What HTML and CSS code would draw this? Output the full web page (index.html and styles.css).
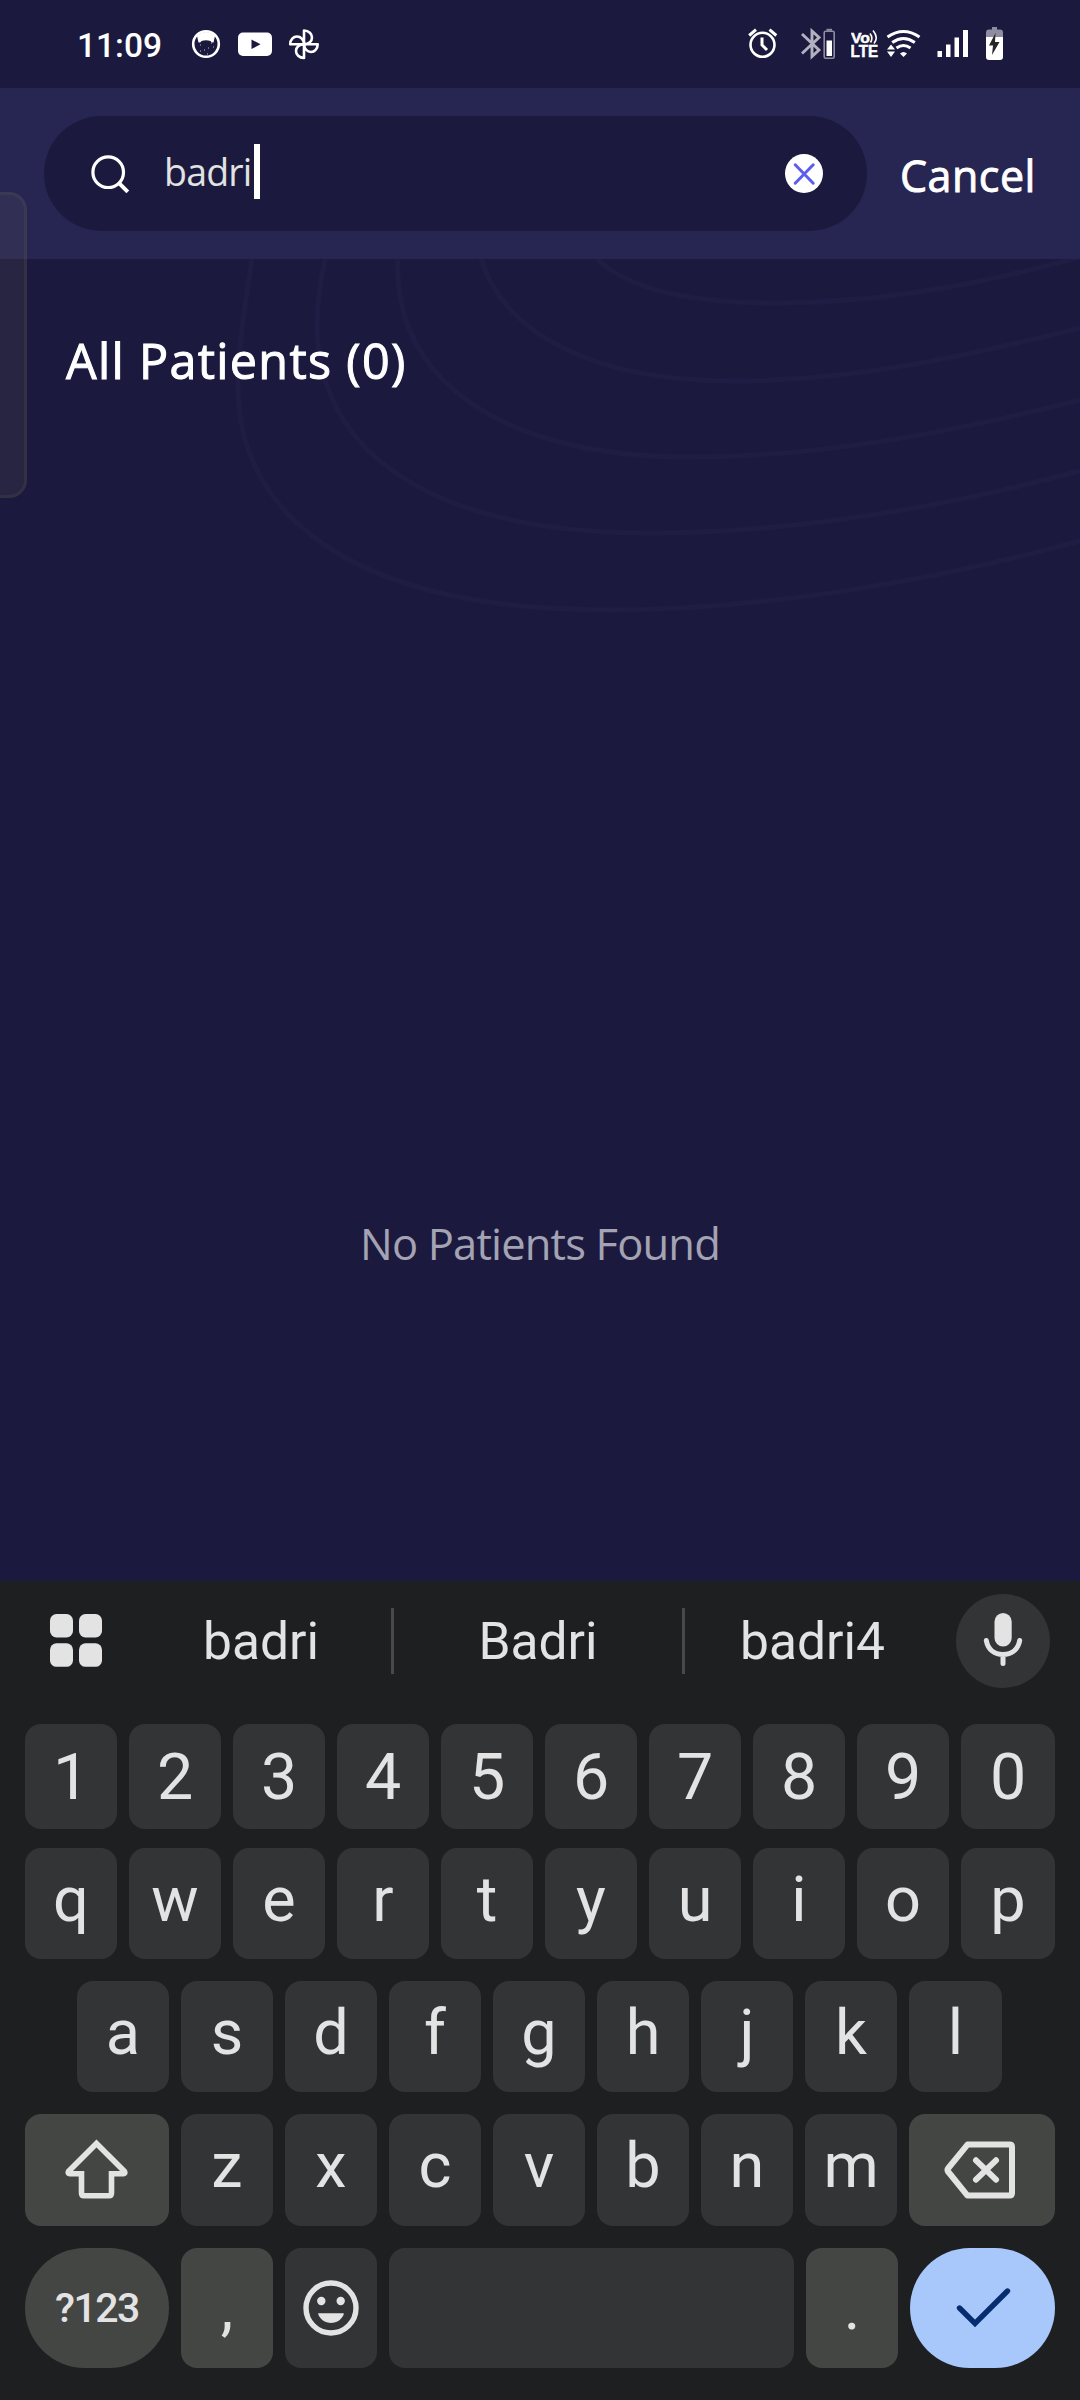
FILE: index.html
```html
<!DOCTYPE html>
<html lang="en">
<head>
<meta charset="utf-8">
<title>Patient search</title>
<link rel="stylesheet" href="styles.css">
</head>
<body>
<div class="screen">
  <div class="status">
    <span class="time">11:09</span>
    <svg class="st-cat" width="30" height="40" viewBox="191 24 30 40"><circle cx="206" cy="44" r="12.8" fill="none" stroke="#fff" stroke-width="2.6"/><path d="M197 36Q206 28 215 36L213.500 42.500Q211.500 43 210.500 41Q206 39.500 201.500 41Q200.500 43 198.500 42.500Z" fill="#fff"/><path d="M200 45h1M204 50h1M211 43h1M208 48h1M213 47h1M207 54h1M200 51h1" stroke="#b9b9c8" stroke-width="1"/></svg>
    <svg class="st-tube" width="34" height="40" viewBox="238 24 34 40"><rect x="238" y="32.500" width="34" height="23.500" rx="5" fill="#fff"/><path d="M251.500 39.500v9.500l9-4.700z" fill="#1b1a3e"/></svg>
    <svg class="st-fan" width="32" height="40" viewBox="288 24 32 40"><g fill="none" stroke="#fff" stroke-width="2.600" stroke-linejoin="round"><path d="M304 44.200V30.500C309 30.500 312 34 312 37.500C312 41 309 44.200 304 44.200"/><path d="M304 44.200H317.700C317.700 49 314.500 52 311 52C307.500 52 304 49 304 44.200"/><path d="M304 44.200V58C299 58 296 54.500 296 51C296 47.500 299 44.200 304 44.200"/><path d="M304 44.200H290.200C290.200 39.500 293.500 36.500 297 36.500C300.500 36.500 304 39.500 304 44.200"/></g></svg>
    <span class="grow"></span>
    <svg class="st-alarm" width="30" height="40" viewBox="748 24 30 40"><g fill="none" stroke="#fff" stroke-width="2.600"><circle cx="762.500" cy="44.800" r="12"/><path d="M762 37.500V45l5 5" stroke-width="3"/><path d="M749.200 35.500l6.800-5.800M776.300 35.500l-6.800-5.800" stroke-width="3"/></g></svg>
    <svg class="st-bt" width="35" height="40" viewBox="801 24 35 40"><path d="M802 34L819 50L812 56.500V31L819 37.500L802 53.500" fill="none" stroke="#b2b1c0" stroke-width="2.900"/><rect x="824.200" y="31.200" width="10" height="27" rx="1.500" fill="none" stroke="#8d8ca2" stroke-width="1.600"/><path d="M826.500 29.800h5.500" stroke="#8d8ca2" stroke-width="2"/><rect x="826.500" y="40.500" width="5.500" height="15.500" fill="#fff"/></svg>
    <svg class="st-volte" width="28" height="40" viewBox="851 24 28 40"><g fill="#fff" stroke="#fff" stroke-width=".5" font-family="Liberation Sans, sans-serif" font-weight="700"><text x="851" y="42.500" font-size="15.500" textLength="19" lengthAdjust="spacingAndGlyphs">Vo</text><text x="850.500" y="57" font-size="16" textLength="27.500" lengthAdjust="spacingAndGlyphs">LTE</text></g><g fill="none" stroke="#fff" stroke-width="1.600"><path d="M870 33.500Q873.500 38 870.500 42.500M873 30.500Q879 37.500 874 43.500"/></g></svg>
    <svg class="st-wifi" width="36" height="40" viewBox="886 24 36 40"><g fill="none" stroke="#fff" stroke-width="3"><path d="M887.500 37Q903.500 26 919.500 37"/><path d="M892.200 42.500Q903.500 34.500 914.800 42.500"/><path d="M896.500 48Q903.500 43 910.500 48"/></g><path d="M900 53.500Q903.500 50.500 907 53.500L903.500 57zM891 44.500l4 5h-8zM887 51.500h8l-4 5.500z" fill="#fff"/></svg>
    <svg class="st-signal" width="32" height="40" viewBox="937 24 32 40"><path d="M937.500 51h4.500v6h-4.500zM946 44.500h4.500V57H946zM954.500 37.500h4.500V57h-4.500zM963 30h5v27h-5z" fill="#fff"/></svg>
    <svg class="st-batt" width="18" height="40" viewBox="986 24 18 40"><path d="M992 27h5v2.500h3q3 0 3 3V37h-17v-4.500q0-3 3-3h3z" fill="#8d8ca0"/><path d="M986 37h17v20q0 3-3 3h-11q-3 0-3-3z" fill="#fff"/><path d="M995.500 33l-6.500 12.500h4l-1 9.500 7.500-13h-4.500z" fill="#262626"/></svg>
  </div>

  <header class="header">
    <div class="search">
      <svg class="lens" width="42" height="42" viewBox="89 152 42 42"><circle cx="108.200" cy="171.200" r="15.300" fill="none" stroke="#fff" stroke-width="3.200"/><path d="M118.800 181.800l9 9" stroke="#fff" stroke-width="4"/></svg>
      <span class="query">badri</span><span class="caret"></span>
      <span class="grow"></span>
      <svg class="clear" width="38" height="39" viewBox="0 0 38 39"><ellipse cx="19" cy="19.500" rx="19" ry="19.500" fill="#fff"/><path d="M10.200 10.800l18 18.400M28.200 10.800l-18 18.400" stroke="#5b5cf0" stroke-width="3" stroke-linecap="round"/></svg>
    </div>
    <span class="cancel">Cancel</span>
  </header>

  <main class="content">
    <svg class="waves" width="1080" height="400" viewBox="0 259 1080 400"><g fill="none" stroke="#201d44" stroke-width="5"><path d="M597 259C630 290 690 303 777 303C880 303 980 285 1080 257"/><path d="M481 259C505 335 595 381 733 381C850 381 960 358 1080 328"/><path d="M398 259C392 378 500 457 688 457C820 457 950 433 1080 400"/><path d="M325 259C321 280 317 300 317 325C317 445 420 533 650 533C790 533 940 508 1080 471"/><path d="M252 259C246 300 238 345 238 387C238 500 330 610 609 610C760 610 930 582 1080 541"/></g></svg>
    <h1 class="title">All Patients (0)</h1>
    <p class="empty">No Patients Found</p>
  </main>

  <section class="keyboard">
    <div class="strip">
      <svg class="apps" width="52" height="53" viewBox="0 0 52 53" fill="#e3e3e3"><rect width="23" height="23.500" rx="6.500"/><rect x="29" width="23" height="23.500" rx="6.500"/><rect y="29.300" width="23" height="23.500" rx="6.500"/><rect x="29" y="29.300" width="23" height="23.500" rx="6.500"/></svg>
      <span class="word w1">badri</span><i class="bar"></i><span class="word w2">Badri</span><i class="bar"></i><span class="word w3">badri4</span>
      <div class="mic"><svg width="94" height="94" viewBox="956 1594 94 94"><rect x="994.500" y="1613" width="17.200" height="33.500" rx="8.600" fill="#e3e3e3"/><path d="M986.300 1640.500C988 1650 995 1654.500 1003 1654.500S1018 1650 1019.700 1640.500M1003 1656v7.500" fill="none" stroke="#e3e3e3" stroke-width="5" stroke-linecap="round"/></svg></div>
    </div>
    <div class="row digits"><b class="key">1</b><b class="key">2</b><b class="key">3</b><b class="key">4</b><b class="key">5</b><b class="key">6</b><b class="key">7</b><b class="key">8</b><b class="key">9</b><b class="key">0</b></div>
    <div class="row upper"><b class="key">q</b><b class="key">w</b><b class="key">e</b><b class="key">r</b><b class="key">t</b><b class="key">y</b><b class="key">u</b><b class="key">i</b><b class="key">o</b><b class="key">p</b></div>
    <div class="row home"><b class="key">a</b><b class="key">s</b><b class="key">d</b><b class="key">f</b><b class="key">g</b><b class="key">h</b><b class="key">j</b><b class="key">k</b><b class="key">l</b></div>
    <div class="row lower">
      <b class="key wide alt"><svg width="64" height="64" viewBox="65 2138 64 64"><path d="M96.500 2143.500L124.500 2171.500Q125.500 2173.500 123.500 2173.700H111.500V2193Q111.500 2195.700 109 2195.700H84Q81.500 2195.700 81.500 2193V2173.700H70Q67.500 2173.500 68.500 2171.500Z" fill="none" stroke="#e3e3e3" stroke-width="5.600"/></svg></b>
      <b class="key">z</b><b class="key">x</b><b class="key">c</b><b class="key">v</b><b class="key">b</b><b class="key">n</b><b class="key">m</b>
      <b class="key wide alt"><svg width="76" height="64" viewBox="944 2138 76 64"><g fill="none" stroke="#e3e3e3" stroke-width="6" stroke-linecap="round" stroke-linejoin="round"><path d="M967.500 2144.600H1009.500Q1012 2144.600 1012 2147V2193Q1012 2195.600 1009.500 2195.600H967.500L948 2171.500Q947 2170 948 2168.500Z"/><path d="M976 2160.300L996 2179.700M996 2160.300L976 2179.700"/></g></svg></b>
    </div>
    <div class="row bottom">
      <b class="key wide alt round sym">?123</b>
      <b class="key alt">,</b>
      <b class="key"><svg width="64" height="64" viewBox="299 2276 64 64"><ellipse cx="331" cy="2308" rx="25" ry="25" fill="none" stroke="#e3e3e3" stroke-width="5.400"/><circle cx="321.300" cy="2301" r="4.200" fill="#e3e3e3"/><circle cx="340.700" cy="2301" r="4.200" fill="#e3e3e3"/><path d="M318.500 2313.300H343.500C345 2313.300 341 2323 331 2323S317 2313.300 318.500 2313.300Z" fill="#e3e3e3"/></svg></b>
      <b class="key space"></b>
      <b class="key alt">.</b>
      <b class="key wide round done"><svg width="60" height="48" viewBox="952 2284 60 48"><path d="M958.500 2308L974 2323.500L1006.500 2291" fill="none" stroke="#062e6f" stroke-width="5.400" stroke-linecap="round"/></svg></b>
    </div>
  </section>
  <div class="edge"></div>
</div>
</body>
</html>
```
FILE: styles.css
```css
* { box-sizing: border-box; }
body { margin: 0; background: #1b1a3e; }
svg { display: block; flex: none; }
.screen { position: relative; width: 1080px; height: 2400px; overflow: hidden; display: flex; flex-direction: column; background: #1b1a3e; color: #fff; font-family: "Open Sans", "Noto Sans", sans-serif; }
.grow { flex: 1; }

.status { height: 88px; padding: 0 76px 0 77px; display: flex; align-items: center; }
.time { width: 114px; font: 500 33.5px/40px Roboto, sans-serif; white-space: nowrap; padding-top: 3px; }
.st-tube { margin-left: 17px; }
.st-fan { margin-left: 16px; }
.st-bt { margin-left: 23px; }
.st-volte { margin-left: 15px; }
.st-wifi { margin-left: 7px; }
.st-signal { margin-left: 15px; }
.st-batt { margin-left: 17px; }

.header { height: 171px; padding: 0 0 0 44px; display: flex; align-items: center; background: #272552; }
.search { width: 823px; height: 115px; border-radius: 58px; padding: 0 44px 0 45px; display: flex; align-items: center; background: #1b1a3e; }
.query { margin-left: 33px; width: 90px; font-size: 37.5px; line-height: 50px; letter-spacing: -0.8px; color: #e2e2e2; padding-bottom: 3px; white-space: nowrap; }
.caret { width: 6px; height: 55px; margin: -4px 0 0 0; background: #fff; }
.cancel { margin-left: 33px; font-size: 43px; line-height: 60px; letter-spacing: 0.5px; white-space: nowrap; padding-top: 4px; -webkit-text-stroke: 0.9px #fff; }

.content { position: relative; height: 1322px; display: flex; flex-direction: column; }
.waves { position: absolute; left: 0; top: 0; }
.title { position: relative; margin: 66px 0 0 66px; font-size: 48.5px; font-weight: 400; line-height: 70px; letter-spacing: 1.3px; white-space: nowrap; -webkit-text-stroke: 1px #fff; }
.empty { margin: 819px 0 0; text-align: center; font-size: 43.5px; line-height: 60px; letter-spacing: -0.85px; color: #a4a3b3; }

.keyboard { flex: 1; background: #1e1f21; padding: 0 25px; color: #e3e3e3; font-family: Roboto, sans-serif; }
.strip { height: 143px; padding: 13px 5px 36px 25px; display: flex; align-items: center; }
.apps { margin-top: -1px; }
.word { text-align: center; font-size: 51.5px; line-height: 60px; padding-top: 1px; }
.w1 { width: 260px; margin-left: 29px; }
.w2 { width: 288px; }
.w3 { width: 255px; }
.bar { width: 3px; height: 66px; background: #48494b; }
.mic { width: 94px; height: 94px; margin-left: 16px; border-radius: 50%; background: #333436; }
.row { display: flex; gap: 12px; }
.key { flex: 0 0 92px; display: flex; align-items: center; justify-content: center; border-radius: 16px; background: #333436; font-size: 63px; font-weight: 400; line-height: 74px; }
.key:last-child { flex: 1 1 0; }
.digits { height: 105px; margin-bottom: 19px; }
.digits .key { font-size: 64.5px; }
.upper { height: 111px; margin-bottom: 22px; }
.home { height: 111px; margin-bottom: 22px; padding: 0 53px 0 52px; }
.lower { height: 112px; margin-bottom: 22px; }
.upper .key, .home .key, .lower .key { padding-bottom: 8px; }
.key.wide { flex-basis: 144px; }
.lower .key.wide { padding-bottom: 0; }
.bottom { height: 120px; }
.bottom .key.space { flex: 0 0 405px; }
.key.alt { background: #444644; }
.key.round { border-radius: 60px; }
.key.sym { font-size: 41px; font-weight: 500; letter-spacing: -1.5px; }
.key.done { background: #a8c7fa; }
.edge { position: absolute; left: -3px; top: 192px; width: 30px; height: 306px; border: 3px solid rgba(120, 120, 90, .13); border-radius: 0 18px 18px 0; background: rgba(128, 124, 100, .12); }
```
